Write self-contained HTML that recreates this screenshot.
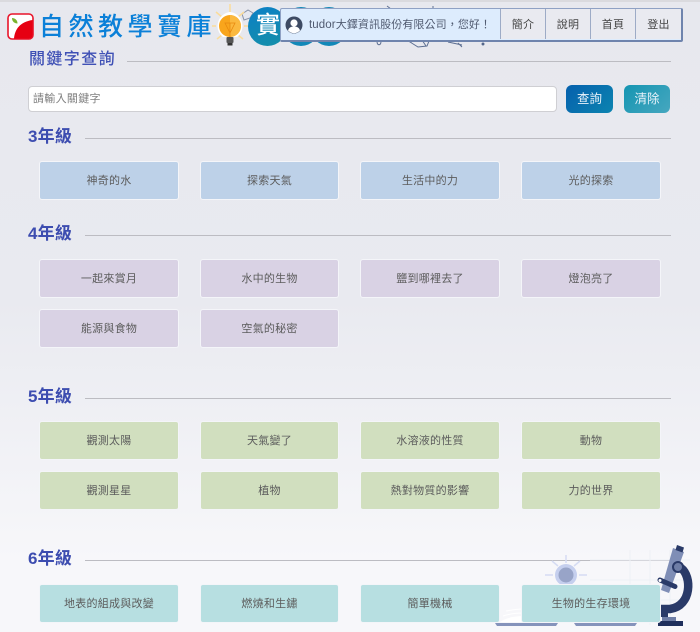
<!DOCTYPE html>
<html lang="zh-Hant"><head><meta charset="utf-8"><title>自然教學寶庫</title>
<style>
*{box-sizing:border-box}
html,body{margin:0;padding:0}
body{width:700px;height:632px;position:relative;overflow:hidden;background:linear-gradient(#e7e8ee 0,#e9eaf0 300px,#f7f7fa 560px,#f7f7fa 632px);font-family:"Liberation Sans","Noto Sans CJK TC",sans-serif;color:#555}
.a{position:absolute}
.h{position:absolute;left:28px;font-size:17px;line-height:22px;font-weight:700;color:#3d4db0;white-space:nowrap;letter-spacing:.2px}
.l{position:absolute;left:85px;width:586px;height:1px;background:#bcbcc2}
.b{position:absolute;width:140px;height:39px;border:1px solid #f4f5f9;border-radius:3px;font-size:11px;line-height:38px;text-align:center;color:#5c5c5c;letter-spacing:.25px;white-space:nowrap}
.c1{background:#bdd1e8}.c2{background:#d9d2e4}.c3{background:#d1dfbf}.c4{background:#b7dfe1}
.x1{left:39px}.x2{left:200px;width:139px}.x3{left:360px}.x4{left:521px}
.cell{position:absolute;top:0;height:30px;border-left:1px solid #9dabc6;background:#e9eaf0;font-size:11px;line-height:32px;text-align:center;color:#444;width:45px;letter-spacing:.2px}
</style></head><body>
<div class="a" style="left:0;top:0;width:700px;height:2px;background:#dadade"></div>

<!-- decorative doodles behind the header -->
<svg class="a" style="left:230px;top:0" width="420" height="50" viewBox="0 0 420 50" fill="none" stroke="#5d6f92" stroke-width="1">
<path d="M12 14l6-4 5 3-3 5-6 2z" fill="#e6e8f0" stroke="#8a94a8"/>
<path d="M157 6l4 3M203 6v3M147 41c0 5 4 5 4 0M155 41h8"/>
<path d="M180 42l8 5 9-1 2-5-8-2z M192 40l4 6"/>
<path d="M218 42l14 3 M228 43l4 4"/>
<circle cx="253" cy="44" r="1" fill="#33466e"/>
</svg>

<!-- logo -->
<svg class="a" style="left:7px;top:13px" width="27" height="27" viewBox="0 0 27 27">
<rect x="1" y="1" width="25" height="25" rx="4" fill="#fff" stroke="#e8142a" stroke-width="1.600"/>
<path d="M7 25.500C8 16 13 9 25.500 7V22a3.500 3.500 0 0 1-3.500 3.500z" fill="#e60012"/>
<path d="M5 5c3 0 5.500 2 5.500 5.500C7.500 10.500 5 8.500 5 5z" fill="#7ab32e"/>
</svg>
<div class="a" style="left:39px;top:10px;font-size:25px;line-height:34px;font-weight:500;letter-spacing:4.500px;color:#0b80d8;white-space:nowrap">自然教學寶庫</div>

<!-- bulb -->
<svg class="a" style="left:212px;top:3px" width="38" height="44" viewBox="0 0 38 44">
<g stroke="#fbdc9a" stroke-width="1.500"><path d="M18 1v8M4 9l6 5M32 9l-6 5M0 23h4M32 23h4M5 36l5-4M31 36l-5-4"/></g>
<path d="M18 9a14 14 0 0 1 7 25h-14a14 14 0 0 1 7-25z" fill="#fff"/>
<circle cx="18" cy="23" r="11" fill="#f9a51c"/>
<path d="M18 12a11 11 0 0 1 0 22z" fill="#fbb93f"/>
<path d="M13 20h10l-5 10zM18 20v14" fill="none" stroke="#e8890f" stroke-width=".8"/>
<rect x="14.500" y="34" width="7" height="6" rx="1" fill="#555"/><rect x="15.500" y="40" width="5" height="2.500" fill="#333"/>
</svg>

<!-- blue circles -->
<div class="a" style="left:248px;top:7px;width:39px;height:39px;border-radius:50%;background:linear-gradient(160deg,#0b7fc6,#1590a8);overflow:hidden"><span style="position:absolute;left:8px;top:0;font-size:24px;line-height:38px;font-weight:500;color:#fff">實</span></div>
<div class="a" style="left:282px;top:7px;width:38px;height:39px;border-radius:50%;background:#1288b8"></div>
<div class="a" style="left:310px;top:7px;width:38px;height:39px;border-radius:50%;background:#1288b8"></div>

<!-- header bar -->
<div class="a" style="left:280px;top:8px;width:403px;height:34px;border:1px solid #8fa1c4;border-right:2px solid #6f84ad;border-bottom:2px solid #6f84ad;background:#ddecfd;border-radius:2px;overflow:hidden">
<svg class="a" style="left:4px;top:7px" width="18" height="18" viewBox="0 0 18 18"><circle cx="9" cy="9" r="8.500" fill="#3d4a63"/><circle cx="9" cy="7" r="3.600" fill="#fff"/><path d="M3 14.500c1-3.500 3.500-4 6-4s5 .5 6 4a8 8 0 0 1-12 0z" fill="#fff"/></svg>
<div class="a" style="left:28px;top:0;font-size:11px;line-height:32px;color:#505a70;white-space:nowrap;letter-spacing:.1px"><span style="font-size:11.500px">tudor</span>大鐸資訊股份有限公司，您好！</div>
<div class="cell" style="left:219px">簡介</div>
<div class="cell" style="left:264px">說明</div>
<div class="cell" style="left:309px">首頁</div>
<div class="cell" style="left:354px;width:46px">登出</div>
</div>

<!-- search -->
<div class="a" style="left:29px;top:50px;font-size:16px;line-height:20px;font-weight:500;color:#3f50b5;letter-spacing:1.400px;white-space:nowrap">關鍵字查詢</div>
<div class="l" style="left:127px;top:61px;width:544px"></div>
<div class="a" style="left:28px;top:86px;width:529px;height:26px;background:#fff;border:1px solid #cfcfd3;border-radius:4px;font-size:11px;line-height:24px;padding-left:4px;color:#808080;letter-spacing:.3px">請輸入關鍵字</div>
<div class="a" style="left:566px;top:85px;width:47px;height:28px;border-radius:6px;background:linear-gradient(135deg,#0560ad,#0c84b0);color:#e8f2fa;font-size:12.500px;line-height:28px;text-align:center">查詢</div>
<div class="a" style="left:624px;top:85px;width:46px;height:28px;border-radius:6px;background:linear-gradient(135deg,#1595b2,#46a7bf);color:#e8f2fa;font-size:12.500px;line-height:28px;text-align:center">清除</div>

<!-- 3 -->
<div class="h" style="top:126px">3年級</div><div class="l" style="top:138px"></div>
<div class="b c1 x1" style="top:160.500px">神奇的水</div>
<div class="b c1 x2" style="top:160.500px">探索天氣</div>
<div class="b c1 x3" style="top:160.500px">生活中的力</div>
<div class="b c1 x4" style="top:160.500px">光的探索</div>

<!-- 4 -->
<div class="h" style="top:223px">4年級</div><div class="l" style="top:235px"></div>
<div class="b c2 x1" style="top:259px">一起來賞月</div>
<div class="b c2 x2" style="top:259px">水中的生物</div>
<div class="b c2 x3" style="top:259px">鹽到哪裡去了</div>
<div class="b c2 x4" style="top:259px">燈泡亮了</div>
<div class="b c2 x1" style="top:309px">能源與食物</div>
<div class="b c2 x2" style="top:309px">空氣的秘密</div>

<!-- 5 -->
<div class="h" style="top:386px">5年級</div><div class="l" style="top:398px"></div>
<div class="b c3 x1" style="top:420.500px">觀測太陽</div>
<div class="b c3 x2" style="top:420.500px">天氣變了</div>
<div class="b c3 x3" style="top:420.500px">水溶液的性質</div>
<div class="b c3 x4" style="top:420.500px">動物</div>
<div class="b c3 x1" style="top:471px">觀測星星</div>
<div class="b c3 x2" style="top:471px">植物</div>
<div class="b c3 x3" style="top:471px">熱對物質的影響</div>
<div class="b c3 x4" style="top:471px">力的世界</div>

<!-- 6 -->
<div class="h" style="top:548px">6年級</div><div class="l" style="top:560px"></div>

<!-- bottom illustration -->
<svg class="a" style="left:480px;top:530px" width="220" height="102" viewBox="0 0 220 102" fill="none">
<g stroke="#eef0f5" stroke-width="1"><path d="M110 30h100M110 50h100M110 70h100M150 20v75M170 20v75M190 20v75"/></g>
<g stroke="#d5dcf3" stroke-width="1.500"><path d="M86 25v8M72 31l6 5M100 31l-6 5M65 45h8M99 45h8"/></g>
<circle cx="86" cy="45" r="11" fill="#c5cfee"/><circle cx="86" cy="45" r="7.500" fill="#98a4c8"/>
<path d="M20 92c8-5 16-6 24-6v6z" fill="#fff"/><path d="M23 86c6-2 13-3 20-3M26 81c6-1 11-2 17-2" stroke="#fff"/>
<path d="M15 93h63l-2 3H17zM94 93h63l-2 3H96z" fill="#8593bb"/>
<path d="M178 91h25v5h-25z" fill="#1f2f5c"/><path d="M182 87h14v4h-14z" fill="#6f7ea6"/>
<path d="M201 38C212 46 212 76 190 79L180 79" stroke="#2a3a68" stroke-width="8.500"/>
<path d="M180 75h8v12h-8z" fill="#2a3a68"/>
<path d="M193 18l11 4-15 41-8-3z" fill="#7f8eb6"/>
<path d="M197 15l7 2.500-1.500 5-7-2.500z" fill="#2a3a68"/>
<circle cx="198" cy="37" r="5" fill="#6f7ea6" stroke="#2a3a68" stroke-width="2"/>
<path d="M180 50l15 6.500" stroke="#2a3a68" stroke-width="5" stroke-linecap="round"/><circle cx="180" cy="50.500" r="1.500" fill="#fff"/>
</svg>

<div class="b c4 x1" style="top:584px">地表的組成與改變</div>
<div class="b c4 x2" style="top:584px">燃燒和生鏽</div>
<div class="b c4 x3" style="top:584px">簡單機械</div>
<div class="b c4 x4" style="top:584px">生物的生存環境</div>
</body></html>
